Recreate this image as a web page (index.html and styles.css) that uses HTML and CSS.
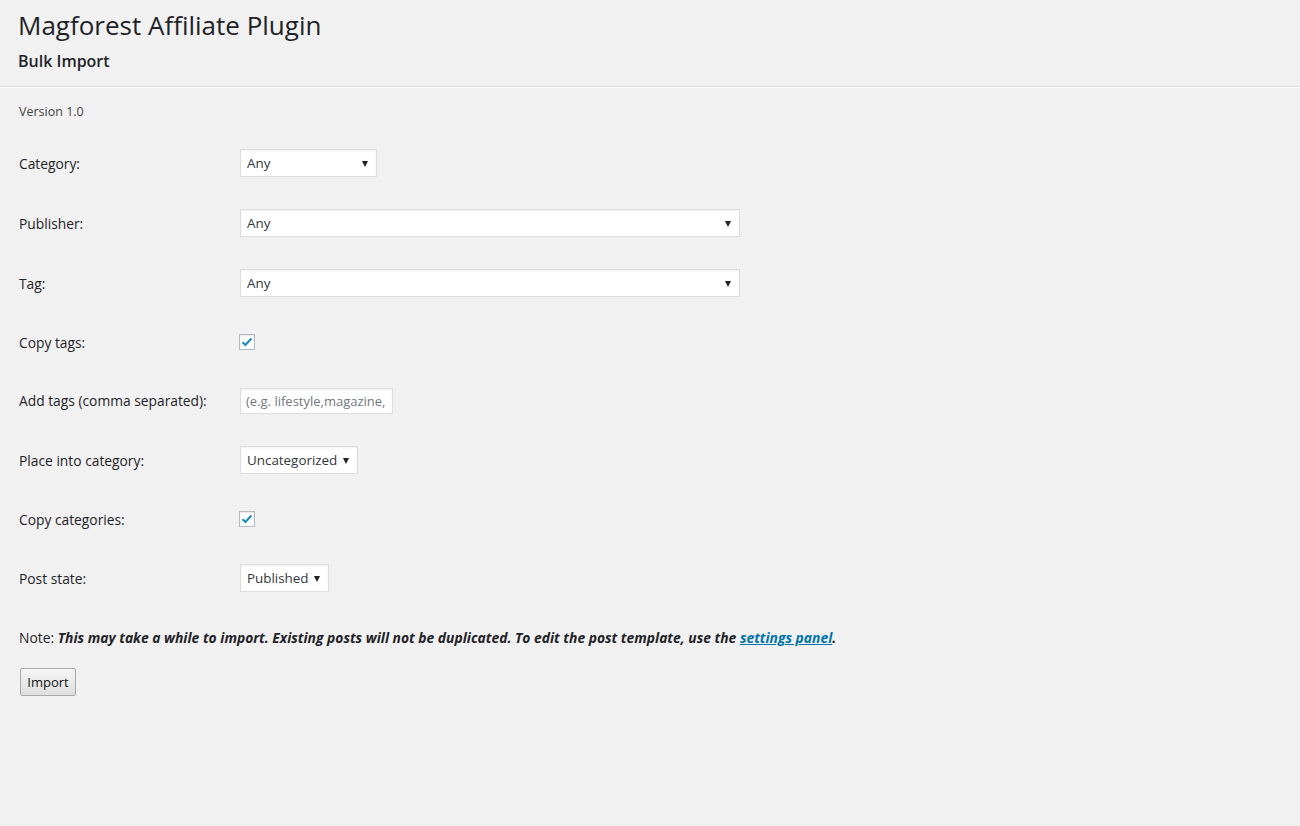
FILE: index.html
```html
<!DOCTYPE html>
<html lang="en">
<head>
<meta charset="utf-8">
<title>Magforest Affiliate Plugin</title>
<link rel="stylesheet" href="styles.css">
</head>
<body>
<div class="wrap">
  <header class="head">
    <h1 class="title">Magforest Affiliate Plugin</h1>
    <h2 class="subtitle">Bulk Import</h2>
  </header>
  <hr class="rule">
  <div class="content">
    <p class="version">Version 1.0</p>
    <form class="form">
      <div class="row row-select">
        <label class="label">Category:</label>
        <span class="select w-cat"><span class="select-text">Any</span></span>
      </div>
      <div class="row row-select">
        <label class="label">Publisher:</label>
        <span class="select w-wide"><span class="select-text">Any</span></span>
      </div>
      <div class="row row-select">
        <label class="label">Tag:</label>
        <span class="select w-wide"><span class="select-text">Any</span></span>
      </div>
      <div class="row row-check">
        <label class="label">Copy tags:</label>
        <span class="checkbox"><svg viewBox="0 0 16 16" width="16" height="16"><path d="M3.6 8.2 L6.4 11 L12.4 4.4" fill="none" stroke="#1e8cbe" stroke-width="2.2"/></svg></span>
      </div>
      <div class="row row-input">
        <label class="label">Add tags (comma separated):</label>
        <span class="text-input"><span class="placeholder">(e.g. lifestyle,magazine,</span></span>
      </div>
      <div class="row row-select">
        <label class="label">Place into category:</label>
        <span class="select w-place"><span class="select-text">Uncategorized</span></span>
      </div>
      <div class="row row-check">
        <label class="label">Copy categories:</label>
        <span class="checkbox"><svg viewBox="0 0 16 16" width="16" height="16"><path d="M3.6 8.2 L6.4 11 L12.4 4.4" fill="none" stroke="#1e8cbe" stroke-width="2.2"/></svg></span>
      </div>
      <div class="row row-select">
        <label class="label">Post state:</label>
        <span class="select w-post"><span class="select-text">Published</span></span>
      </div>
      <p class="note">Note: <em class="note-em">This may take a while to import. Existing posts will not be duplicated. To edit the post template, use the <a class="link" href="#">settings panel</a>.</em></p>
      <button type="button" class="button">Import</button>
    </form>
  </div>
</div>
</body>
</html>
```
FILE: styles.css
```css
html, body {
  margin: 0;
  padding: 0;
  background: #f1f1f1;
}
body {
  font-family: "Open Sans", "Noto Sans", sans-serif;
  color: #23282d;
  font-size: 13px;
  width: 1300px;
  height: 826px;
  overflow: hidden;
}
.wrap {
  padding-top: 11px;
}
.head {
  padding-left: 18px;
}
.title {
  margin: 0;
  font-size: 26px;
  font-weight: 400;
  line-height: 29px;
  color: #1f2327;
}
.subtitle {
  margin: 9px 0 0 0;
  font-size: 16px;
  font-weight: 600;
  line-height: 24px;
  color: #1f2327;
}
.rule {
  margin: 13px 0 0 0;
  border: 0;
  border-top: 1px solid #dcdcdc;
  border-bottom: 1px solid #fafafa;
  height: 0;
}
.content {
  padding-left: 19px;
}
.version {
  margin: 14px 0 0 0;
  font-size: 12.5px;
  line-height: 20px;
  color: #444;
}
.form {
  margin-top: 11px;
}
.row {
  display: grid;
  grid-template-columns: 221px auto;
  align-items: center;
  justify-items: start;
  font-size: 13.8px;
}
.row-select { height: 60px; }
.row-check { height: 58px; }
.row-input { height: 59px; }
.label {
  color: #1f2327;
}
.select {
  position: relative;
  display: flex;
  align-items: center;
  box-sizing: border-box;
  height: 28px;
  padding: 0 24px 0 6px;
  background: #fff;
  border: 1px solid #ddd;
  box-shadow: inset 0 1px 2px rgba(0,0,0,0.07);
  color: #32373c;
  font-size: 13.4px;
  white-space: nowrap;
}
.select::after {
  content: "";
  position: absolute;
  right: 8px;
  top: 11px;
  border-left: 3.5px solid transparent;
  border-right: 3.5px solid transparent;
  border-top: 6px solid #222;
}
.w-cat { width: 137px; }
.w-wide { width: 500px; }
.w-place { width: 118px; }
.w-post { width: 89px; }
.checkbox {
  display: block;
  box-sizing: border-box;
  width: 16px;
  height: 16px;
  border: 1px solid #b4b9be;
  background: #fff;
  box-shadow: inset 0 1px 2px rgba(0,0,0,0.1);
  margin-left: -1px;
}
.checkbox svg {
  display: block;
  margin: -1px 0 0 -1px;
}
.text-input {
  display: flex;
  align-items: center;
  box-sizing: border-box;
  width: 153px;
  height: 26px;
  padding: 0 5px;
  background: #fff;
  border: 1px solid #ddd;
  box-shadow: inset 0 1px 2px rgba(0,0,0,0.07);
  overflow: hidden;
  white-space: nowrap;
  font-size: 13px;
}
.placeholder {
  color: #72777c;
}
.note {
  margin: 20px 0 0 0;
  font-size: 13.85px;
  line-height: 20px;
  color: #1f2327;
}
.note-em {
  font-style: italic;
  font-weight: 700;
}
.link {
  color: #0073aa;
  text-decoration: underline;
}
.button {
  margin-top: 20px;
  margin-left: 1px;
  box-sizing: border-box;
  height: 28px;
  width: 56px;
  padding: 0;
  font-family: "Open Sans", "Noto Sans", sans-serif;
  font-size: 13px;
  color: #111;
  border: 1px solid #a9a9a9;
  border-radius: 2px;
  background: linear-gradient(#f6f6f6, #dedede);
}
```
